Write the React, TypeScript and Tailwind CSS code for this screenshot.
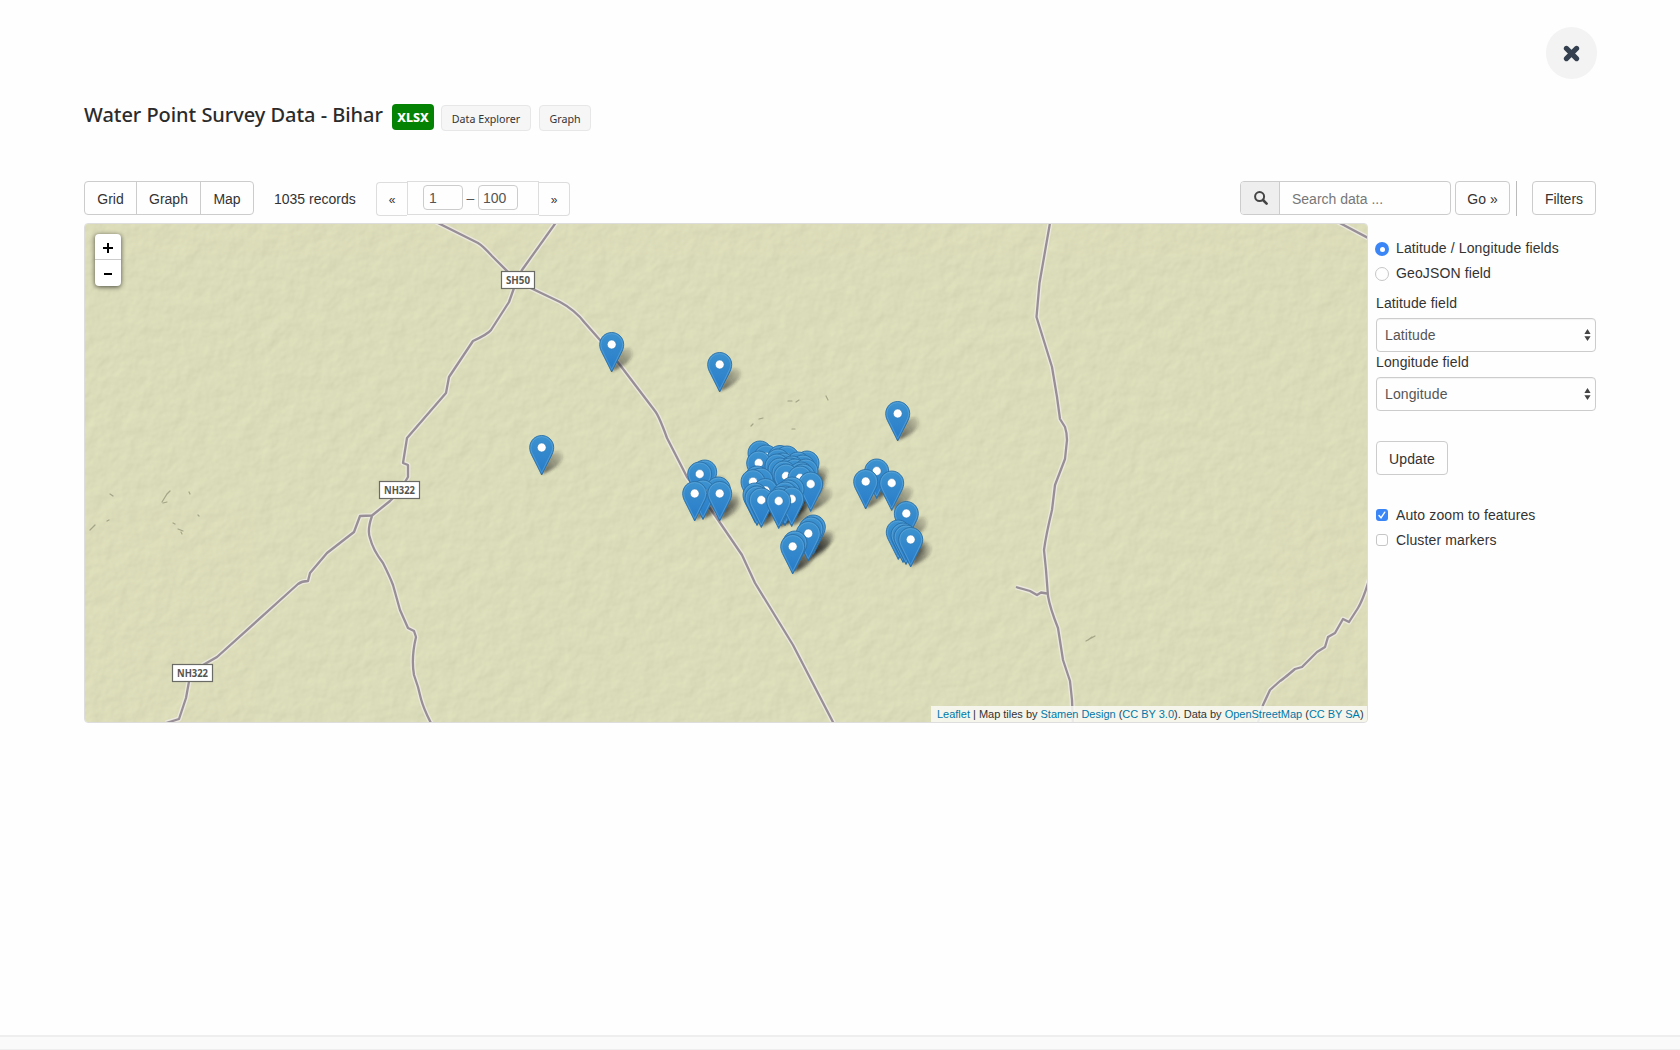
import React from 'react';

const roads = [
  'M436 222 L478 243 Q483 246 492 256 L518 282 L560 302 Q575 310 585 323 L600 340 L620 365 L655 411 Q659 416 667 438 L687 477 L712 511 L742 555 Q748 568 755 583 L793 645 L835 726',
  'M557 221 L522 270 L514 288 L509 302 L491 330 Q488 334 473 341 L449 377 L446 393 L407 438 L403 463 L408 465 L408 477 L399 492 L390 501 L372 515.5 L360 516 L354 532 L327 553 L310 573 L308 581 Q302 581 298 584 L217 657 L203 665 L190 676 L186 698 L179 719 L166 723',
  'M372 516 Q367 530 370 538 Q373 550 383 563 Q390 577 393 585 L400 610 L408 628 L414 631 L416 637 Q411 658 414 675 L418 687 L421 699 Q424 710 433 727',
  'M1050.5 220 L1039.5 283 L1036.5 317 L1052 367 L1057 397 L1060 419 L1065 427 Q1067 433 1067 440 L1065 459 L1055 485 L1052 510 Q1046 535 1044 550 L1046 570 L1048 596 Q1050 608 1058 628 L1063 660 L1070 681 L1072 700 L1073 726',
  'M1016 587 L1030 591 L1037 595 L1041 592.5 L1047 593.5',
  'M1369 580 Q1363 600 1358 608 L1349 622 L1343 619 L1335 633 L1328 637 L1325 647 L1317 652 L1302 667 L1295 669 Q1282 680 1280 681 L1270 690 L1263 705 L1257 726',
  'M1336 221 L1370 239',
];

const shields = [
  { x: 518, y: 280, w: 33, label: 'SH50' },
  { x: 399.5, y: 490, w: 40, label: 'NH322' },
  { x: 192.5, y: 673, w: 40, label: 'NH322' },
];

// Marker head centres, in map coordinates
const pins: [number, number][] = [
  [611.7, 344.5], [719.7, 364.5], [897.7, 413.5], [541.7, 447.5],
  [760, 453], [766, 457], [780, 457.5], [787, 458], [778, 461], [807, 463], [758.7, 463],
  [798, 464], [777, 466], [783, 465], [803, 467], [780, 470], [792, 468], [795, 471],
  [790, 470], [784, 473], [806, 471], [801, 474], [786, 476], [803, 476], [800, 478],
  [757, 478], [753, 481.7], [761, 480], [810.7, 484], [792, 489], [765.5, 490.5], [788, 492], [785, 494],
  [755, 495], [757, 498], [761.3, 500], [781, 498.5], [785, 498], [791.7, 499], [778.7, 501],
  [704.7, 472], [699.7, 474], [718.3, 489], [703, 492], [694.7, 493.5], [719.7, 493.5],
  [876.7, 471], [865.7, 481.5], [891.7, 483],
  [906.3, 513.5], [898.3, 532], [903, 535], [906, 537], [910.7, 539.5],
  [813.3, 527], [811, 529], [808.3, 533.5], [795, 543], [792.7, 546.5],
];
const pinsBackToFront = [...pins].sort((a, b) => a[1] - b[1]);

function TerrainMap() {
  return (
    <svg className="block h-full w-full" viewBox="85 224 1282 498" preserveAspectRatio="none">
      <defs>
        <filter id="relief" x="0" y="0" width="100%" height="100%" colorInterpolationFilters="sRGB">
          <feTurbulence type="fractalNoise" baseFrequency="0.06" numOctaves="3" seed="8" result="n" />
          <feDiffuseLighting in="n" surfaceScale="0.8" diffuseConstant="1.18" lightingColor="#dbdcb9">
            <feDistantLight azimuth="225" elevation="58" />
          </feDiffuseLighting>
        </filter>
        <filter id="soft" x="-50%" y="-50%" width="200%" height="200%"><feGaussianBlur stdDeviation="1.8" /></filter>
        <linearGradient id="pinFill" x1="0" y1="0" x2="0" y2="1">
          <stop offset="0" stopColor="#3d92cf" />
          <stop offset="1" stopColor="#267bc9" />
        </linearGradient>
        <linearGradient id="shade" x1="0" y1="1" x2="1" y2="0">
          <stop offset="0" stopColor="#222" stopOpacity="0.7" />
          <stop offset="1" stopColor="#222" stopOpacity="0.1" />
        </linearGradient>
        <g id="pin">
          <path d="M0 27.5 L-10.3 7 C-11.4 4.8 -12 2.3 -12 0 C-12 -6.6 -6.6 -12 0 -12 S12 -6.6 12 0 C12 2.3 11.4 4.8 10.3 7 Z" fill="url(#pinFill)" stroke="#2b6fa6" strokeWidth="0.9" />
          <path d="M0 25 L-9.2 6.4 C-10.3 4.2 -10.9 2 -10.9 0 A10.9 10.9 0 0 1 10.9 0 C10.9 2 10.3 4.2 9.2 6.4 Z" fill="none" stroke="#6cb0df" strokeOpacity="0.55" strokeWidth="0.9" />
          <circle r="4.4" fill="#fff" stroke="#2c75ae" strokeOpacity="0.7" strokeWidth="0.7" />
        </g>
        <path id="pinShadow" d="M0 27 L7 10 C11 2 21 2 21 9 C21 15 13 22 0 27Z" fill="url(#shade)" filter="url(#soft)" />
      </defs>
      <rect x="84" y="223" width="1285" height="501" fill="#dbdcb9" />
      <rect x="84" y="223" width="1285" height="501" filter="url(#relief)" opacity="0.3" />
      <g fill="none" stroke="#77775f" strokeOpacity="0.55" strokeWidth="1.2" strokeLinecap="round">
        <path d="M162 502 l5 -8 l3 -3 M163 503 l4 -1 M189 492 l1 2 M198 515 l1 1 M173 523 l2 1 M178 529 l5 2 M181 532 l1 2 M90 530 l5 -5 M107 521 l2 -1 M110 494 l3 2" />
        <path d="M788 401 l4 0 M796 402 l3 -2 M826 396 l2 4 M759 419 l4 -1 M751 426 l2 -2 M792 429 l3 0" />
        <path d="M1086 641 l9 -5 M1088 640 l4 -3" />
      </g>
      <g fill="none" strokeLinejoin="round" strokeLinecap="butt">
        {roads.map((d) => <path key={d} d={d} stroke="#ebe8de" strokeWidth="5" />)}
        {roads.map((d) => <path key={d} d={d} stroke="#978f95" strokeWidth="2.3" />)}
      </g>
      {shields.map((s) => (
        <g key={`${s.x}-${s.y}`}>
          <rect x={s.x - s.w / 2} y={s.y - 8.5} width={s.w} height="17" fill="#fff" stroke="#6b6b66" strokeWidth="1.2" />
          <text x={s.x} y={s.y + 3.6} textAnchor="middle" fontFamily="'Noto Sans', sans-serif" fontWeight="700" fontSize="10" textLength={s.w - 9} lengthAdjust="spacingAndGlyphs" fill="#55554f">{s.label}</text>
        </g>
      ))}
      {pinsBackToFront.map(([x, y], i) => <use key={i} href="#pinShadow" x={x} y={y} />)}
      {pinsBackToFront.map(([x, y], i) => <use key={i} href="#pin" x={x} y={y} />)}
    </svg>
  );
}

function SelectBox({ value }: { value: string }) {
  return (
    <div className="flex h-[34px] items-center justify-between rounded-[4px] border border-[#ccc] pr-[4px] pl-[8px] text-[#555] shadow-[inset_0_1px_1px_rgba(0,0,0,0.05)]">
      <span>{value}</span>
      <svg width="7" height="12" viewBox="0 0 7 12" fill="#444"><path d="M3.5 0 6.6 5H.4zM3.5 12 .4 7.2h6.2z" /></svg>
    </div>
  );
}

const link = 'text-[#0078a8]';

export default function App() {
  return (
    <div className="flex h-[1050px] w-[1680px] flex-col overflow-hidden bg-[#fefefe] font-['Liberation_Sans',Arial,sans-serif] text-[14px] leading-[20px] text-[#333]">
      <div className="flex h-[79px] items-end justify-end pr-[83px]">
        <button className="flex h-[52px] w-[51px] items-center justify-center rounded-full bg-[#f3f3f3]">
          <svg width="17" height="17" viewBox="0 0 18 18" stroke="#34404f" strokeWidth="5.4" strokeLinecap="round"><path d="M3.6 3.6 14.4 14.4M14.4 3.6 3.6 14.4" /></svg>
        </button>
      </div>

      <div className="mt-[25px] flex h-[27px] pl-[84px] font-['Noto_Sans',sans-serif]">
        <h1 className="w-[308px] text-[20px] leading-[22px] font-medium tracking-[-0.04px] whitespace-nowrap text-[#2b2b2b]">Water Point Survey Data - Bihar</h1>
        <span className="flex h-[26px] w-[42px] items-center justify-center rounded-[4px] bg-[#048204] pt-px text-[12.5px] font-extrabold text-white">XLSX</span>
        <span className="mt-px ml-[7px] flex h-[26px] w-[90px] items-center justify-center rounded-[4px] border border-[#e7e7e7] bg-[#f6f6f6] pt-px text-[10.7px]">Data Explorer</span>
        <span className="mt-px ml-[8px] flex h-[26px] w-[52px] items-center justify-center rounded-[4px] border border-[#e7e7e7] bg-[#f6f6f6] pt-px text-[10.7px]">Graph</span>
      </div>

      <div className="mt-[50px] flex h-[42px] items-start pr-[84px] pl-[84px]">
        <div className="flex h-[34px] w-[170px] rounded-[4px] border border-[#ccc]">
          <span className="flex w-[52px] items-center justify-center border-r border-[#ccc] pt-px">Grid</span>
          <span className="flex w-[64px] items-center justify-center border-r border-[#ccc] pt-px">Graph</span>
          <span className="flex flex-1 items-center justify-center pt-px">Map</span>
        </div>
        <span className="mt-[8px] ml-[20px] w-[102px] whitespace-nowrap">1035 records</span>
        <span className="mt-px flex h-[34px] w-[31px] items-center justify-center rounded-l-[4px] border border-r-0 border-[#ddd] pt-[2px] text-[12px]">«</span>
        <div className="flex h-[34px] w-[132px] items-center border border-[#ddd] pb-px pl-[15px] text-[#555]">
          <span className="flex h-[25px] w-[40px] items-center rounded-[4px] border border-[#ccc] pl-[5px]">1</span>
          <span className="w-[15px] text-center">–</span>
          <span className="flex h-[25px] w-[40px] items-center rounded-[4px] border border-[#ccc] pl-[4px]">100</span>
        </div>
        <span className="mt-px flex h-[34px] w-[31px] items-center justify-center rounded-r-[4px] border border-l-0 border-[#ddd] pt-[2px] text-[12px]">»</span>

        <div className="ml-auto flex h-[34px] w-[211px] rounded-[4px] border border-[#ccc]">
          <span className="flex w-[39px] items-center justify-center rounded-l-[3px] border-r border-[#ccc] bg-[#eee] pl-px">
            <svg width="14" height="14" viewBox="0 0 14 14" fill="none" stroke="#444"><circle cx="5.6" cy="5.6" r="4.5" strokeWidth="2" /><path d="M9 9l3.6 3.6" strokeWidth="2.6" strokeLinecap="round" /></svg>
          </span>
          <span className="flex items-center pt-px pl-[12px] text-[#777]">Search data ...</span>
        </div>
        <span className="ml-[4px] flex h-[34px] w-[55px] items-center justify-center rounded-[4px] border border-[#ccc] pt-px">Go »</span>
        <span className="ml-[6px] h-[35px] w-px bg-[#bbb]" />
        <span className="ml-[15px] flex h-[34px] w-[64px] items-center justify-center rounded-[4px] border border-[#ccc] pt-px">Filters</span>
      </div>

      <div className="flex h-[500px] pr-[84px] pl-[84px]">
        <div className="relative h-[500px] w-[1284px] overflow-hidden rounded-[4px] border border-[#ddd]">
          <TerrainMap />
          <div className="absolute top-[10px] left-[10px] h-[52px] w-[26px] rounded-[4px] bg-white shadow-[0_1px_5px_rgba(0,0,0,0.65)]">
            <div className="flex h-[26px] items-center justify-center border-b border-[#ccc] pt-[3px]">
              <svg width="10" height="10" viewBox="0 0 10 10" stroke="#000" strokeWidth="2"><path d="M0 5h10M5 0v10" /></svg>
            </div>
            <div className="flex h-[26px] items-center justify-center pt-[2px]">
              <svg width="8" height="2" viewBox="0 0 8 2"><rect width="8" height="2" /></svg>
            </div>
          </div>
          <div className="absolute right-0 bottom-0 h-[16px] w-[436px] bg-[#f9f9f4]/85 pl-[6px] text-[11px] leading-[17px] tracking-[-0.01px] whitespace-nowrap text-[#333]">
            <span className={link}>Leaflet</span> | Map tiles by <span className={link}>Stamen Design</span> (<span className={link}>CC BY 3.0</span>). Data by <span className={link}>OpenStreetMap</span> (<span className={link}>CC BY SA</span>)
          </div>
        </div>

        <div className="ml-[8px] w-[220px] pt-[15px] tracking-[0.12px]">
          <div className="flex h-[20px] items-center gap-[6px]">
            <span className="flex h-[14px] w-[14px] -translate-x-px translate-y-px items-center justify-center rounded-full bg-[#3b86f7]"><span className="h-[5px] w-[5px] rounded-full bg-white" /></span>
            <span>Latitude / Longitude fields</span>
          </div>
          <div className="mt-[5px] flex h-[20px] items-center gap-[6px]">
            <span className="h-[14px] w-[14px] -translate-x-px translate-y-px rounded-full border border-[#c6c6c6]" />
            <span>GeoJSON field</span>
          </div>
          <div className="mt-[10px] mb-[5px]">Latitude field</div>
          <SelectBox value="Latitude" />
          <div className="mb-[5px]">Longitude field</div>
          <SelectBox value="Longitude" />
          <div className="mt-[30px] flex h-[34px] w-[72px] items-center justify-center rounded-[4px] border border-[#ccc] pt-px">Update</div>
          <div className="mt-[30px] flex h-[20px] items-center gap-[8px]">
            <span className="flex h-[12px] w-[12px] items-center justify-center rounded-[3px] bg-[#3b86f7]">
              <svg width="8" height="8" viewBox="0 0 8 8" fill="none" stroke="#fff" strokeWidth="1.4" strokeLinecap="round"><path d="M1 4.5 3 6.8 6.8 1.2" /></svg>
            </span>
            <span>Auto zoom to features</span>
          </div>
          <div className="mt-[5px] flex h-[20px] items-center gap-[8px]">
            <span className="h-[12px] w-[12px] rounded-[3px] border border-[#c6c6c6]" />
            <span>Cluster markers</span>
          </div>
        </div>
      </div>

      <div className="mt-auto h-[15px] border-t-2 border-b border-t-[#eeeeee] border-b-[#eeeeee] bg-[#fafafa]" />
    </div>
  );
}
